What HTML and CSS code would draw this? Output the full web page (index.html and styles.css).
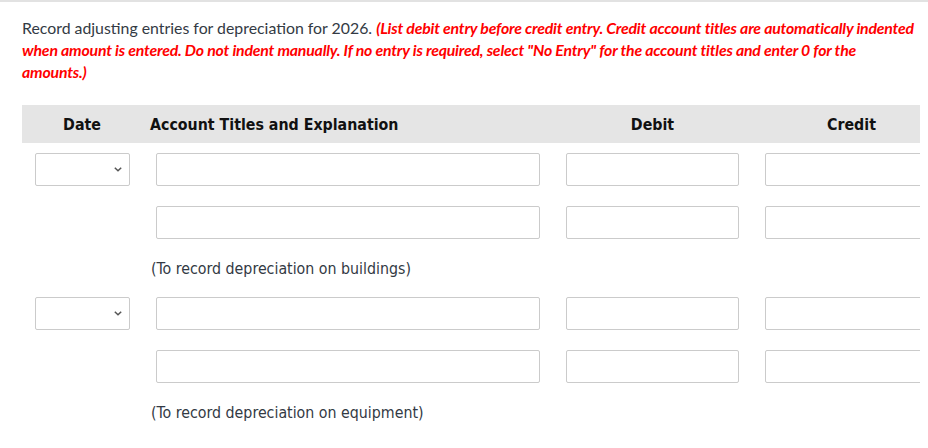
FILE: index.html
```html
<!DOCTYPE html>
<html>
<head>
<meta charset="utf-8">
<link rel="stylesheet" href="styles.css">
</head>
<body>
<div class="top-rule"></div>
<div class="page">
  <p class="prompt">Record adjusting entries for depreciation for 2026. <em class="note">(List debit entry before credit entry. Credit account titles are automatically indented when amount is entered. Do not indent manually. If no entry is required, select "No Entry" for the account titles and enter 0 for the amounts.)</em></p>
  <div class="journal">
    <div class="jrow head">
      <div class="h-date">Date</div>
      <div class="h-acct">Account Titles and Explanation</div>
      <div class="h-amt">Debit</div>
      <div class="h-amt">Credit</div>
    </div>
    <div class="entry">
      <div class="jrow line">
        <div class="select"><svg width="8" height="5" viewBox="0 0 8 5"><path d="M0.8 0.8 L4 3.8 L7.2 0.8" fill="none" stroke="#555" stroke-width="1.5"/></svg></div>
        <div class="field acct"></div>
        <div class="field amt"></div>
        <div class="field amt"></div>
      </div>
      <div class="jrow line">
        <div></div>
        <div class="field acct"></div>
        <div class="field amt"></div>
        <div class="field amt"></div>
      </div>
      <div class="jrow memo">
        <div></div>
        <div class="memo-text">(To record depreciation on buildings)</div>
      </div>
    </div>
    <div class="entry">
      <div class="jrow line">
        <div class="select"><svg width="8" height="5" viewBox="0 0 8 5"><path d="M0.8 0.8 L4 3.8 L7.2 0.8" fill="none" stroke="#555" stroke-width="1.5"/></svg></div>
        <div class="field acct"></div>
        <div class="field amt"></div>
        <div class="field amt"></div>
      </div>
      <div class="jrow line">
        <div></div>
        <div class="field acct"></div>
        <div class="field amt"></div>
        <div class="field amt"></div>
      </div>
      <div class="jrow memo">
        <div></div>
        <div class="memo-text">(To record depreciation on equipment)</div>
      </div>
    </div>
  </div>
</div>
</body>
</html>
```
FILE: styles.css
```css
html, body { margin: 0; padding: 0; background: #fff; }
.top-rule { height: 2px; background: #e2e2e2; }
.page { padding: 15px 8px 0 22px; }
.prompt {
  margin: 0 0 22px 0;
  width: 898px;
  font-family: Lato, "Noto Sans", sans-serif;
  font-size: 15.85px;
  line-height: 22px;
  color: #333a44;
}
.note { color: #f00; font-weight: 700; font-style: italic; letter-spacing: -0.2px; }
.journal { width: 898px; overflow: hidden; }
.jrow {
  display: grid;
  grid-template-columns: 120px 411px 199px 199px;
  align-items: center;
}
.head {
  height: 38px;
  background: #e5e5e5;
  font-family: "DejaVu Sans Condensed", "DejaVu Sans", sans-serif;
  font-weight: 700;
  font-size: 15.8px;
  color: #111;
  margin-bottom: 10px;
}
.h-date, .h-amt { text-align: center; }
.h-acct { padding-left: 8px; }
.line { height: 33px; margin-bottom: 20px; }
.select {
  justify-self: center;
  width: 95px;
  height: 33px;
  box-sizing: border-box;
  border: 1px solid #cbcbcb;
  border-radius: 2px;
  display: flex;
  align-items: center;
  justify-content: flex-end;
  padding-right: 7px;
}
.field {
  height: 33px;
  box-sizing: border-box;
  border: 1px solid #cbcbcb;
  border-radius: 2px;
}
.acct { width: 384px; margin-left: 14px; }
.amt { width: 173px; justify-self: center; }
.memo { height: 20px; margin-bottom: 18px; }
.memo-text {
  padding-left: 9px;
  font-family: "DejaVu Sans Condensed", "DejaVu Sans", sans-serif;
  font-size: 15.8px;
  line-height: 20px;
  color: #333a44;
  white-space: nowrap;
}
```
